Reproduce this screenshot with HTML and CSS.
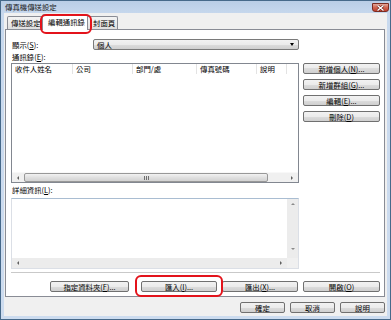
FILE: index.html
```html
<!DOCTYPE html>
<html>
<head>
<title>傳真機傳送設定</title>
<link rel="stylesheet" href="styles.css">
</head>
<body>
<div class="window">
    <div class="titlebar">
        <span class="title">傳真機傳送設定</span>
        <span class="close">
            <svg width="9" height="6" viewBox="0 0 9 6"><path d="M1.5 0.5 L7.5 5.5 M7.5 0.5 L1.5 5.5" stroke="#6b1f16" stroke-width="2.6"/><path d="M1.5 0.5 L7.5 5.5 M7.5 0.5 L1.5 5.5" stroke="#fff" stroke-width="1.4"/></svg>
        </span>
    </div>
    <div class="client">
        <div class="tabs">
            <div class="tab tab1">傳送設定</div>
            <div class="tab active">編輯通訊錄</div>
            <div class="tab tab3">封面頁</div>
        </div>
        <div class="panel">
            <div class="showRow">
                <span class="label showLabel">顯示(<u>S</u>):</span>
                <div class="combo"><span>個人</span><span class="comboArrow"></span></div>
            </div>
            <div class="label listLabel">通訊錄(<u>E</u>):</div>
            <div class="mainRow">
                <div class="listview">
                    <div class="header">
                        <div class="col c1">收件人姓名</div>
                        <div class="col c2">公司</div>
                        <div class="col c3">部門/處</div>
                        <div class="col c4">傳真號碼</div>
                        <div class="col c5">說明</div>
                    </div>
                    <div class="listBody"></div>
                    <div class="hscroll">
                        <div class="arrowBox"><span class="arr left"></span></div>
                        <div class="thumb"><span class="grip"></span><span class="grip"></span><span class="grip"></span></div>
                        <div class="track"></div>
                        <div class="arrowBox"><span class="arr right"></span></div>
                    </div>
                </div>
                <div class="sideButtons">
                    <button class="btn">新增個人(<u>N</u>)...</button>
                    <button class="btn">新增群組(<u>G</u>)...</button>
                    <button class="btn">編輯(<u>E</u>)...</button>
                    <button class="btn">刪除(<u>D</u>)</button>
                </div>
            </div>
            <div class="label detailLabel">詳細資訊(<u>L</u>):</div>
            <div class="details">
                <div class="detailsText"></div>
                <div class="vscroll">
                    <span class="arr up"></span>
                    <span class="arr down"></span>
                </div>
                <div class="dscroll">
                    <span class="arr left"></span>
                    <span class="arr right"></span>
                </div>
                <div class="corner"></div>
            </div>
            <div class="sep"></div>
            <div class="panelButtons">
                <button class="btn wFolder">指定資料夾(<u>F</u>)...</button>
                <button class="btn wMid">匯入(<u>I</u>)...</button>
                <button class="btn wMid">匯出(<u>X</u>)...</button>
                <button class="btn wOpen">開啟(<u>O</u>)</button>
            </div>
        </div>
        <div class="dialogButtons">
            <button class="btn wSmall">確定</button>
            <button class="btn wSmall">取消</button>
            <button class="btn wSmall">說明</button>
        </div>
    </div>
    <!-- red highlight marks -->
    <div class="mark markTab"></div>
    <div class="mark markImport"></div>
</div>
</body>
</html>
```

FILE: styles.css
```css
*{
    box-sizing: border-box;
}
body{
    margin: 0;
    font-family: "Noto Sans CJK TC", "Liberation Sans", sans-serif;
    font-size: 7.4px;
    color: #000;
}
.window{
    position: relative;
    width: 391px;
    height: 320px;
    border: 1px solid #46698a;
    background: linear-gradient(#b9cde6, #c8d9ee 14px, #cddcef);
}
.titlebar{
    height: 12px;
    display: flex;
    justify-content: space-between;
    align-items: flex-start;
    padding: 0 1px 0 4px;
}
.title{
    line-height: 12px;
    color: #1a1a1a;
}
.close{
    width: 17px;
    height: 9px;
    margin-top: 2px;
    border: 1px solid #7b2c22;
    border-radius: 0 0 3px 3px;
    background: linear-gradient(#e3a597, #d06652 50%, #c0402f);
    display: flex;
    align-items: center;
    justify-content: center;
}
.client{
    margin: 0 3px 3px 3px;
    height: 303px;
    background: #f0f0f0;
    padding: 0 2px 3px 1px;
    display: flex;
    flex-direction: column;
}

/* tabs */
.tabs{
    position: relative;
    z-index: 1;
    display: flex;
    align-items: flex-end;
    height: 16px;
    padding-left: 2px;
}
.tab{
    height: 13px;
    line-height: 12px;
    border: 1px solid #898c95;
    border-bottom: none;
    border-radius: 2px 2px 0 0;
    background: linear-gradient(#f3f3f3, #ebebeb 50%, #dedede);
    padding-left: 3px;
    white-space: nowrap;
    overflow: hidden;
}
.tab1{
    width: 37px;
}
.tab.active{
    position: relative;
    z-index: 2;
    width: 46px;
    height: 16px;
    margin: 0 -1px -1px -2px;
    background: #fff;
    padding-left: 5px;
    line-height: 14px;
}
.tab3{
    width: 31px;
    padding-left: 5px;
}

/* panel */
.panel{
    height: 268px;
    border: 1px solid #898c95;
    background: #fff;
    padding: 9px 4px 4px 5px;
    display: flex;
    flex-direction: column;
}
.showRow{
    display: flex;
    align-items: center;
    height: 11px;
}
.showLabel{
    width: 82px;
    padding-left: 1px;
}
.label{
    white-space: nowrap;
}
.combo{
    width: 206px;
    height: 11px;
    border: 1px solid #7a7a7a;
    border-radius: 2px;
    background: linear-gradient(#f2f2f2, #ebebeb 50%, #dddddd 50%, #cfcfcf);
    display: flex;
    align-items: center;
    justify-content: space-between;
    padding: 0 4px 0 3px;
    line-height: 9px;
}
.comboArrow{
    width: 0;
    height: 0;
    border-left: 2.5px solid transparent;
    border-right: 2.5px solid transparent;
    border-top: 3px solid #000;
}
.listLabel{
    height: 13px;
    line-height: 13px;
    padding-left: 1px;
}
.mainRow{
    display: flex;
    gap: 4px;
    height: 120px;
}
.listview{
    width: 288px;
    height: 120px;
    border: 1px solid #828790;
    display: flex;
    flex-direction: column;
}
.header{
    display: flex;
    height: 10px;
}
.col{
    border-right: 1px solid #e3e3e3;
    padding-left: 3px;
    line-height: 10px;
    white-space: nowrap;
}
.c1{ width: 61px; }
.c2{ width: 60px; }
.c3{ width: 64px; }
.c4{ width: 60px; }
.c5{ width: 30px; }
.listBody{
    flex: 1;
}
.hscroll{
    height: 10px;
    display: flex;
    background: #f0f0f0;
    border-top: 1px solid #f8f8f8;
}
.arrowBox{
    width: 12px;
    display: flex;
    align-items: center;
    justify-content: center;
}
.thumb{
    width: 244px;
    border: 1px solid #989898;
    border-radius: 2px;
    background: linear-gradient(#f2f2f2, #e0e0e0 50%, #d2d2d2);
    display: flex;
    align-items: center;
    justify-content: center;
    gap: 1px;
}
.grip{
    width: 1px;
    height: 4px;
    background: #6f6f6f;
}
.track{
    flex: 1;
}
.arr{
    width: 0;
    height: 0;
    display: block;
}
.arr.left{
    border-top: 2px solid transparent;
    border-bottom: 2px solid transparent;
    border-right: 2px solid #606060;
}
.arr.right{
    border-top: 2px solid transparent;
    border-bottom: 2px solid transparent;
    border-left: 2px solid #606060;
}
.arr.up{
    border-left: 2px solid transparent;
    border-right: 2px solid transparent;
    border-bottom: 2px solid #8a8a8a;
}
.arr.down{
    border-left: 2px solid transparent;
    border-right: 2px solid transparent;
    border-top: 2px solid #8a8a8a;
}
.sideButtons{
    width: 77px;
    display: flex;
    flex-direction: column;
    gap: 5px;
}
.btn{
    height: 11px;
    border: 1px solid #707070;
    border-radius: 2px;
    background: linear-gradient(#f2f2f2, #ebebeb 50%, #dddddd 50%, #cfcfcf);
    font: inherit;
    color: #000;
    padding: 0;
    line-height: 9px;
    text-align: center;
    white-space: nowrap;
}
.detailLabel{
    height: 15px;
    line-height: 14px;
    padding-left: 1px;
}
.details{
    height: 71px;
    width: 288px;
    border: 1px solid #dbdfe6;
    border-top-color: #a9bdd2;
    display: grid;
    grid-template-columns: 1fr 11px;
    grid-template-rows: 1fr 10px;
}
.vscroll{
    background: #ececec;
    display: flex;
    flex-direction: column;
    justify-content: space-between;
    align-items: center;
    padding: 4px 0 8px 0;
}
.dscroll{
    background: #ececec;
    display: flex;
    justify-content: space-between;
    align-items: center;
    padding: 0 5px 0 5px;
}
.corner{
    background: #f0f0f0;
}
.sep{
    height: 1px;
    margin-top: 3px;
    background: #c9c9c9;
}
.panelButtons{
    margin-top: 8px;
    height: 11px;
    display: flex;
    justify-content: flex-end;
    gap: 5px;
}
.wFolder{ width: 79px; margin-right: 7px; }
.wMid{ width: 76px; }
.wOpen{ width: 77px; }
.dialogButtons{
    margin-top: 5px;
    height: 11px;
    display: flex;
    justify-content: flex-end;
    gap: 5px;
}
.wSmall{ width: 45px; }

/* red highlight marks */
.mark{
    position: absolute;
    border: 2px solid #e3131b;
    border-radius: 6px;
    z-index: 5;
}
.markTab{
    left: 39px;
    top: 13px;
    width: 52px;
    height: 20px;
}
.markImport{
    left: 134px;
    top: 274px;
    width: 88px;
    height: 22px;
}
```
